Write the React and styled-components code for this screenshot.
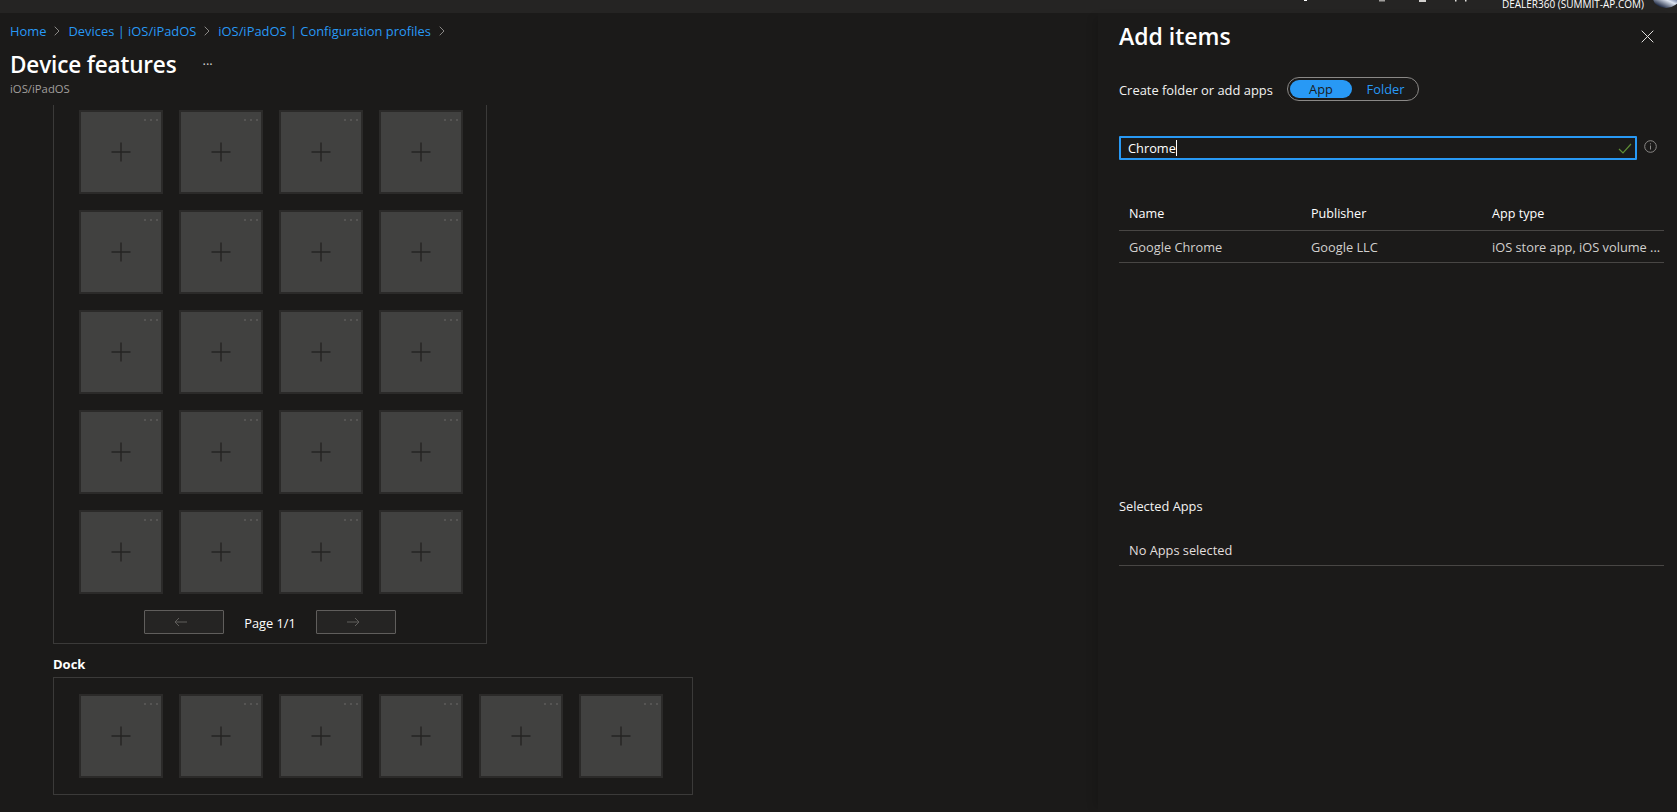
import React from "react";
import styled, { createGlobalStyle } from "styled-components";

const Global = createGlobalStyle`
  html, body { margin: 0; padding: 0; height: 100%; overflow: hidden; background: #1b1a19; }
  #root { height: 100%; }
  * { box-sizing: border-box; }
`;

const Page = styled.div`
  width: 1677px; height: 812px; overflow: hidden; display: flex; flex-direction: column;
  background: #1b1a19; color: #f3f2f1;
  font-family: "Open Sans", "Noto Sans", sans-serif;
  font-size: 12.8px;
`;
const TopBar = styled.div`
  height: 13px; flex: none; background: #252423; display: flex; justify-content: flex-end;
  overflow: hidden; position: relative;
`;
const ClippedIcons = styled.svg`width: 170px; height: 3px; margin-right: 33px; flex: none;`;
const Account = styled.div`
  font-size: 10px; line-height: 10px; color: #fff; margin-right: 33px; margin-top: -1px; white-space: nowrap;
`;
const Avatar = styled.div`
  position: absolute; right: -2px; top: -12px; width: 26px; height: 20px; border-radius: 50%;
  background: linear-gradient(25deg, #1f2a44 15%, #dfe6f2 45%, #50608a 65%, #6f7050);
`;
const Body = styled.div`
  flex: 1; display: flex; min-height: 0;
`;
const Main = styled.div`
  width: 1098px; flex: none; display: flex; flex-direction: column;
`;
const Header = styled.header`
  height: 92px; flex: none; padding: 9px 0 0 10px;
`;
const Crumbs = styled.nav`
  display: flex; align-items: center; height: 16px; margin-top: 1px; font-size: 12.9px;
`;
const Crumb = styled.span`color: #2899f5; white-space: nowrap;`;
const Chevron = styled.svg`width: 6px; height: 10px; margin: 0 8px; flex: none;`;
const TitleRow = styled.div`display: flex; align-items: center; margin-top: 13px; height: 26px;`;
const Title = styled.h1`
  margin: 0; font-size: 22.5px; letter-spacing: -0.15px; font-weight: 600; line-height: 26px; color: #fff; white-space: nowrap;
`;
const More = styled.span`margin-left: 26px; font-size: 13px; line-height: 16px; color: #d2d0ce; position: relative; top: -1px;`;
const Sub = styled.div`font-size: 11.3px; color: #a19f9d; margin-top: 4px; line-height: 14px;`;

const Content = styled.div`padding-left: 53px; display: flex; flex-direction: column; align-items: flex-start;`;
const PageFrame = styled.section`
  width: 434px; height: 539px; border: 1px solid #3b3a39; border-top: none;
  padding: 5px 0 0 25px;
`;
const Grid = styled.div`
  display: grid; grid-template-columns: repeat(4, 84px); grid-auto-rows: 84px; gap: 16px;
`;
const Tile = styled.div`
  width: 84px; height: 84px; background: #414140; border: 2px solid #2b2a29; position: relative;
  display: flex; align-items: center; justify-content: center;
`;
const Dots = styled.svg`position: absolute; top: 7px; right: 3px; width: 14px; height: 3px;`;
const Plus = styled.svg`width: 20px; height: 20px;`;
const Pager = styled.div`display: flex; align-items: center; margin: 16px 0 0 65px; height: 24px;`;
const PagerButton = styled.div`
  width: 80px; height: 24px; background: #252423; border: 1px solid #605e5c; border-radius: 1px;
  display: flex; align-items: center; justify-content: center; padding-right: 7px;
`;
const PageLabel = styled.div`width: 92px; text-align: center; font-size: 12.8px; color: #fff; position: relative; top: 1px;`;
const DockLabel = styled.div`font-size: 13px; font-weight: 700; color: #fff; line-height: 16px; margin-top: 12px;`;
const DockFrame = styled.section`
  width: 640px; height: 118px; border: 1px solid #3b3a39; margin-top: 5px; padding: 16px 0 0 25px;
`;
const DockRow = styled.div`display: grid; grid-template-columns: repeat(6, 84px); gap: 16px;`;

const Panel = styled.aside`
  flex: 1; min-width: 0; padding: 0 13px 0 21px; display: flex; flex-direction: column;
  background: #1b1a19; box-shadow: -8px 0 8px -4px rgba(0,0,0,0.12); position: relative;
`;
const PanelHead = styled.div`
  display: flex; justify-content: space-between; align-items: center; height: 26px; margin-top: 10px;
`;
const PanelTitle = styled.h2`margin: 0; font-size: 23px; font-weight: 600; color: #fff; line-height: 26px;`;
const Close = styled.svg`width: 13px; height: 13px; margin-right: 10px;`;
const ToggleRow = styled.div`display: flex; align-items: center; margin-top: 28px; height: 24px;`;
const ToggleLabel = styled.label`width: 168px; font-size: 12.9px; color: #f3f2f1; white-space: nowrap; position: relative; top: 1px;`;
const Toggle = styled.div`
  width: 132px; height: 24px; border: 1px solid #8a8886; border-radius: 12px; padding: 2px;
  display: flex; align-items: center;
`;
const ToggleOption = styled.div`
  width: ${p => (p.$on ? 62 : 64)}px; height: 18px; border-radius: 9px; text-align: center; line-height: 18px;
  font-size: 12.8px; background: ${p => (p.$on ? "#2899f5" : "transparent")};
  color: ${p => (p.$on ? "#1b1a19" : "#2899f5")};
  padding-left: ${p => (p.$on ? 0 : 3)}px;
`;
const SearchRow = styled.div`display: flex; align-items: center; margin-top: 35px;`;
const Search = styled.div`
  width: 518px; height: 24px; border: 2px solid #2899f5; border-radius: 1px; display: flex; align-items: center;
  padding: 0 3px 0 7px; justify-content: space-between;
`;
const SearchText = styled.span`font-size: 12.8px; color: #fff; border-right: 1px solid #fff; line-height: 16px; position: relative; top: -0.5px;`;
const Info = styled.svg`width: 13px; height: 13px; margin: -4px 0 0 7px;`;
const Table = styled.div`margin-top: 40px;`;
const TableRow = styled.div`
  display: grid; grid-template-columns: 182px 181px 1fr; padding-left: 10px; height: ${p => p.$h}px; align-items: center;
  padding-bottom: ${p => p.$pb || 0}px;
  border-bottom: 1px solid #484644; white-space: nowrap;
`;
const HeadCell = styled.div`font-size: 12.6px; color: #fff;`;
const Cell = styled.div`font-size: 12.8px; color: #d2d0ce;`;
const SelectedLabel = styled.div`margin-top: 235px; font-size: 12.8px; color: #f3f2f1; line-height: 16px;`;
const SelectedRow = styled.div`
  margin-top: 23px; height: 29px; padding: 0 0 3px 10px; border-bottom: 1px solid #484644; font-size: 12.8px; color: #e1dfdd;
  display: flex; align-items: center;
`;

const Ch = () => (
  <Chevron viewBox="0 0 6 10"><path d="M.7.7 5 5 .7 9.3" fill="none" stroke="#8a8886" strokeWidth="1" /></Chevron>
);
const Cell84 = () => (
  <Tile>
    <Dots viewBox="0 0 14 3"><g fill="#565554"><rect x="0" y="0" width="2" height="2" /><rect x="6" y="0" width="2" height="2" /><rect x="12" y="0" width="2" height="2" /></g></Dots>
    <Plus viewBox="0 0 20 20"><path d="M10 .5v19M.5 10h19" stroke="#252423" strokeWidth="1.4" fill="none" /></Plus>
  </Tile>
);

export default function App() {
  return (
    <Page>
      <Global />
      <TopBar>
        <ClippedIcons viewBox="0 0 170 3">
          <rect x="5" y="0" width="3" height="1" fill="#fff" />
          <rect x="80" y="0" width="6" height="1.5" fill="#a19f9d" />
          <rect x="120" y="0" width="7" height="2" fill="#d2d0ce" />
          <rect x="156" y="0" width="1.5" height="1.5" fill="#e1dfdd" />
          <rect x="166" y="0" width="1.5" height="1.5" fill="#e1dfdd" />
        </ClippedIcons>
        <Account>DEALER360 (SUMMIT-AP.COM)</Account>
        <Avatar />
      </TopBar>
      <Body>
        <Main>
          <Header>
            <Crumbs>
              <Crumb>Home</Crumb><Ch />
              <Crumb>Devices | iOS/iPadOS</Crumb><Ch />
              <Crumb>iOS/iPadOS | Configuration profiles</Crumb><Ch />
            </Crumbs>
            <TitleRow><Title>Device features</Title><More>···</More></TitleRow>
            <Sub>iOS/iPadOS</Sub>
          </Header>
          <Content>
            <PageFrame>
              <Grid>{Array.from({ length: 20 }, (_, i) => <Cell84 key={i} />)}</Grid>
              <Pager>
                <PagerButton>
                  <svg width="14" height="10" viewBox="0 0 14 10"><path d="M13 5H1M5 1 1 5l4 4" fill="none" stroke="#605e5c" /></svg>
                </PagerButton>
                <PageLabel>Page 1/1</PageLabel>
                <PagerButton>
                  <svg width="14" height="10" viewBox="0 0 14 10"><path d="M1 5h12M9 1l4 4-4 4" fill="none" stroke="#605e5c" /></svg>
                </PagerButton>
              </Pager>
            </PageFrame>
            <DockLabel>Dock</DockLabel>
            <DockFrame>
              <DockRow>{Array.from({ length: 6 }, (_, i) => <Cell84 key={i} />)}</DockRow>
            </DockFrame>
          </Content>
        </Main>
        <Panel>
          <PanelHead>
            <PanelTitle>Add items</PanelTitle>
            <Close viewBox="0 0 13 13"><path d="M.7.7l11.6 11.6M12.3.7.7 12.3" stroke="#e1dfdd" fill="none" /></Close>
          </PanelHead>
          <ToggleRow>
            <ToggleLabel>Create folder or add apps</ToggleLabel>
            <Toggle>
              <ToggleOption $on>App</ToggleOption>
              <ToggleOption>Folder</ToggleOption>
            </Toggle>
          </ToggleRow>
          <SearchRow>
            <Search>
              <SearchText>Chrome</SearchText>
              <svg width="14" height="11" viewBox="0 0 14 11"><path d="M1 6l4 4 8-9" fill="none" stroke="#5f8f36" strokeWidth="1.2" /></svg>
            </Search>
            <Info viewBox="0 0 13 13"><circle cx="6.5" cy="6.5" r="5.8" fill="none" stroke="#8a8886" /><path d="M6.5 5.5v4M6.5 3.3v1.1" stroke="#8a8886" fill="none" /></Info>
          </SearchRow>
          <Table>
            <TableRow $h={31} $pb={3}><HeadCell>Name</HeadCell><HeadCell>Publisher</HeadCell><HeadCell>App type</HeadCell></TableRow>
            <TableRow $h={32}><Cell>Google Chrome</Cell><Cell>Google LLC</Cell><Cell>iOS store app, iOS volume ...</Cell></TableRow>
          </Table>
          <SelectedLabel>Selected Apps</SelectedLabel>
          <SelectedRow>No Apps selected</SelectedRow>
        </Panel>
      </Body>
    </Page>
  );
}
